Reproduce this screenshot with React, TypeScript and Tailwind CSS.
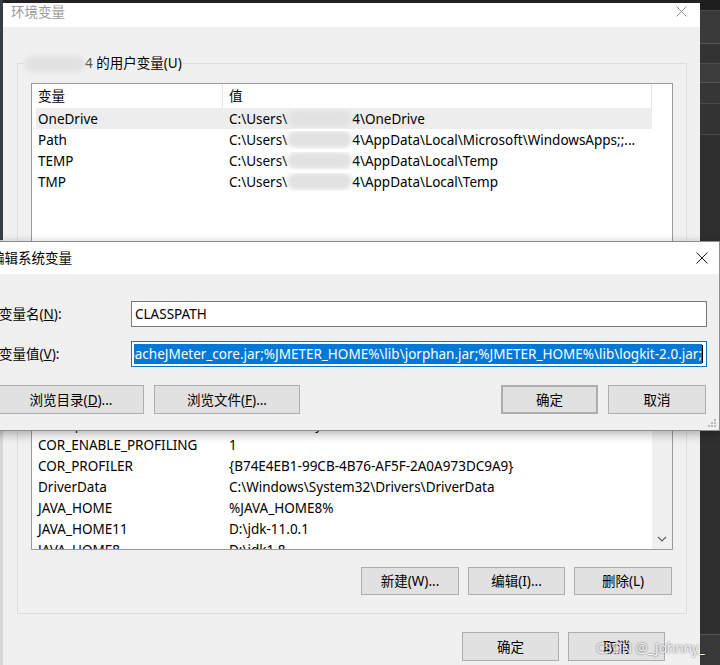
import React from 'react';

type Row = [string, string];

const userRows = [
  { name: 'OneDrive', post: '4\\OneDrive' },
  { name: 'Path', post: '4\\AppData\\Local\\Microsoft\\WindowsApps;;...' },
  { name: 'TEMP', post: '4\\AppData\\Local\\Temp' },
  { name: 'TMP', post: '4\\AppData\\Local\\Temp' },
];

const sysRows: Row[] = [
  ['ANT_HOME', 'D:\\apache-ant-1.10.5'],
  ['CATALINA_HOME', 'D:\\apache-tomcat-9.0.14'],
  ['CLASSPATH', '.;%JAVA_HOME%\\lib\\dt.jar;%JAVA_HOME%\\lib\\tools.jar;...'],
  ['ComSpec', 'C:\\Windows\\system32\\cmd.exe'],
  ['COR_ENABLE_PROFILING', '1'],
  ['COR_PROFILER', '{B74E4EB1-99CB-4B76-AF5F-2A0A973DC9A9}'],
  ['DriverData', 'C:\\Windows\\System32\\Drivers\\DriverData'],
  ['JAVA_HOME', '%JAVA_HOME8%'],
  ['JAVA_HOME11', 'D:\\jdk-11.0.1'],
  ['JAVA_HOME8', 'D:\\jdk1.8'],
];

const classpath =
  '.;%JAVA_HOME%\\lib;%JMETER_HOME%\\lib\\ext\\ApacheJMeter_core.jar;%JMETER_HOME%\\lib\\jorphan.jar;%JMETER_HOME%\\lib\\logkit-2.0.jar;';

// Win10 风格按钮
const Btn: React.FC<{ className?: string; children: React.ReactNode }> = ({ className, children }) => (
  <div
    className={
      'flex items-center justify-center border border-[#adadad] bg-[#e1e1e1] whitespace-nowrap ' + (className || '')
    }
  >
    {children}
  </div>
);

const Blur: React.FC<{ className?: string }> = ({ className }) => (
  <span className={'inline-block rounded-full bg-[#e2e2e2] blur-[2px] align-middle ' + (className || '')} />
);

const CloseX: React.FC<{ color: string; size: number; className?: string }> = ({ color, size, className }) => (
  <svg width={size} height={size} viewBox="0 0 12 12" className={className}>
    <path d="M0.5 0.5L11.5 11.5M11.5 0.5L0.5 11.5" stroke={color} strokeWidth="1" fill="none" />
  </svg>
);

export default function App() {
  return (
    <div className="relative flex h-[665px] w-[720px] overflow-hidden bg-[#2b2b2b] font-['Noto_Sans','Noto_Sans_CJK_SC',sans-serif] text-[13.5px] leading-[18px] text-black">
      {/* 左侧边缘 */}
      <div className="flex w-[3px] flex-col">
        <div className="h-[240px] bg-[#3a3d42]" />
        <div className="flex-1 bg-[#d6d6d6]" />
      </div>

      {/* 环境变量 主窗口 */}
      <div className="flex w-[697px] flex-col bg-[#222222] pt-[3px]">
        <div className="flex flex-1 flex-col bg-[#f0f0f0]">
          <div className="flex h-[24px] items-start justify-between bg-white pl-[8px] pr-[13px]">
            <span className="text-[#9a9a9a]">环境变量</span>
            <CloseX color="#8a8a8a" size={11} className="mt-[3px]" />
          </div>

          {/* 用户变量 */}
          <fieldset className="ml-[14px] mt-[26px] w-[670px] border border-[#dcdcdc] pb-[12px]">
            <legend className="ml-[6px] h-[20px] leading-[20px]">
              <Blur className="h-[16px] w-[61px]" />
              <span className="text-[#555]">4</span> 的用户变量(U)
            </legend>
            <div className="ml-[13px] mt-[10px] h-[160px] w-[642px] border border-[#9a9a9a] bg-white">
              <div className="flex h-[24px] items-center">
                <div className="h-full w-[191px] border-r border-[#e5e5e5] pl-[6px] leading-[24px]">变量</div>
                <div className="h-full w-[429px] border-r border-[#e5e5e5] pl-[6px] leading-[24px]">值</div>
              </div>
              {userRows.map((r, i) => (
                <div
                  key={r.name}
                  className={
                    'ml-[4px] grid h-[21px] w-[616px] grid-cols-[191px_1fr] items-center ' +
                    (i === 0 ? 'bg-[#ededed]' : '')
                  }
                >
                  <div className="pl-[2px]">{r.name}</div>
                  <div className="flex items-center overflow-hidden whitespace-nowrap pl-[2px]">
                    <span>C:\Users\</span>
                    <Blur className="h-[17px] w-[65px] shrink-0" />
                    <span>{r.post}</span>
                  </div>
                </div>
              ))}
            </div>
            <div className="mt-[12px] flex justify-end gap-[9px] pr-[14px]">
              <Btn className="h-[28px] w-[98px]">新建(N)...</Btn>
              <Btn className="h-[28px] w-[97px]">编辑(E)...</Btn>
              <Btn className="h-[28px] w-[98px]">删除(D)</Btn>
            </div>
          </fieldset>

          {/* 系统变量 */}
          <fieldset className="ml-[14px] mt-[8px] w-[670px] border border-[#dcdcdc] pb-[18px]">
            <legend className="ml-[6px] h-[20px] px-[1px] leading-[20px]">系统变量(S)</legend>
            <div className="ml-[13px] mt-[1px] flex h-[225px] w-[642px] border border-[#9a9a9a] bg-white">
              <div className="flex w-[620px] flex-col">
                <div className="flex h-[24px] shrink-0 items-center">
                  <div className="h-full w-[191px] border-r border-[#e5e5e5] pl-[6px] leading-[24px]">变量</div>
                  <div className="h-full w-[429px] pl-[6px] leading-[24px]">值</div>
                </div>
                <div className="flex-1 overflow-hidden">
                  {sysRows.map(([k, v]) => (
                    <div key={k} className="ml-[4px] grid h-[21px] w-[616px] grid-cols-[191px_1fr] items-center">
                      <div className="pl-[2px]">{k}</div>
                      <div className="overflow-hidden whitespace-nowrap pl-[2px]">{v}</div>
                    </div>
                  ))}
                </div>
              </div>
              <div className="flex w-[20px] flex-col justify-end bg-[#f0f0f0]">
                <div className="flex h-[20px] items-center justify-center">
                  <svg width="10" height="6" viewBox="0 0 10 6">
                    <path d="M1 1L5 5L9 1" stroke="#606060" strokeWidth="1.2" fill="none" />
                  </svg>
                </div>
              </div>
            </div>
            <div className="mt-[17px] flex justify-end gap-[9px] pr-[14px]">
              <Btn className="h-[28px] w-[98px]">新建(W)...</Btn>
              <Btn className="h-[28px] w-[97px]">编辑(I)...</Btn>
              <Btn className="h-[28px] w-[98px]">删除(L)</Btn>
            </div>
          </fieldset>

          <div className="mt-[18px] flex justify-end gap-[9px] pr-[35px]">
            <Btn className="h-[29px] w-[97px]">确定</Btn>
            <Btn className="h-[29px] w-[97px]">取消</Btn>
          </div>
        </div>
      </div>

      {/* 右侧其他窗口 */}
      <div className="flex flex-1 flex-col bg-[#2f2f2f]">
        <div className="h-[10px] bg-[#1e1e1e]" />
        <div className="h-px bg-[#4a4a4a]" />
        <div className="h-[32px] bg-[#3a3a3a]" />
        <div className="h-px bg-[#555555]" />
        <div className="h-[19px] bg-[#333333]" />
        <div className="h-px bg-[#4d4d4d]" />
        <div className="h-[18px] bg-[#3d3d3d]" />
        <div className="h-px bg-[#555555]" />
        <div className="h-[20px] bg-[#363636]" />
        <div className="h-px bg-[#4a4a4a]" />
        <div className="h-[30px] bg-[#333333]" />
        <div className="h-px bg-[#4a4a4a]" />
        <div className="flex-1 bg-[#2f2f2f]" />
        <div className="h-px bg-[#555555]" />
        <div className="h-[30px] bg-[#383838]" />
      </div>

      {/* 编辑系统变量 对话框 */}
      <div className="absolute left-[-18px] top-[241px] flex h-[190px] w-[738px] flex-col border border-[#8e8e8e] bg-[#f0f0f0] shadow-[0_3px_10px_rgba(0,0,0,0.3)]">
        <div className="flex h-[32px] shrink-0 items-center justify-between bg-white pl-[8px] pr-[11px]">
          <span>编辑系统变量</span>
          <CloseX color="#111" size={12} />
        </div>
        <div className="flex flex-1 flex-col pl-[16px] pt-[27px]">
          <div className="flex items-center">
            <div className="w-[132px]">
              变量名(<span className="underline">N</span>):
            </div>
            <div className="flex h-[26px] w-[576px] items-center border border-[#7a7a7a] bg-white pl-[3px]">
              CLASSPATH
            </div>
          </div>
          <div className="mt-[14px] flex items-center">
            <div className="w-[132px]">
              变量值(<span className="underline">V</span>):
            </div>
            <div className="flex h-[26px] w-[576px] items-center border border-[#0078d7] bg-white pl-[2px] pr-[3px]">
              <div className="flex min-w-0 flex-1 justify-end overflow-hidden">
                <span className="shrink-0 whitespace-nowrap bg-[#0078d7] leading-[20px] text-white">{classpath}</span>
              </div>
              <span className="h-[18px] w-px shrink-0 bg-black" />
            </div>
          </div>
          <div className="ml-[-1px] mt-[18px] flex items-center justify-between pr-[13px]">
            <div className="flex gap-[10px]">
              <Btn className="h-[29px] w-[146px]">
                浏览目录(<span className="underline">D</span>)...
              </Btn>
              <Btn className="h-[29px] w-[146px]">
                浏览文件(<span className="underline">F</span>)...
              </Btn>
            </div>
            <div className="flex gap-[10px]">
              <Btn className="h-[29px] w-[97px] border-2 border-[#0078d7]">确定</Btn>
              <Btn className="h-[29px] w-[98px]">取消</Btn>
            </div>
          </div>
        </div>
        <svg width="9" height="9" viewBox="0 0 9 9" className="absolute bottom-[2px] right-[2px]">
          <rect x="6" y="0" width="2" height="2" fill="#b8b8b8" />
          <rect x="3" y="3" width="2" height="2" fill="#b8b8b8" />
          <rect x="6" y="3" width="2" height="2" fill="#b8b8b8" />
          <rect x="0" y="6" width="2" height="2" fill="#b8b8b8" />
          <rect x="3" y="6" width="2" height="2" fill="#b8b8b8" />
          <rect x="6" y="6" width="2" height="2" fill="#b8b8b8" />
        </svg>
      </div>

      {/* 水印 */}
      <div className="absolute left-[596px] top-[639px] whitespace-nowrap text-[13.5px] leading-[19px] text-white/90 [text-shadow:0_0_2px_rgba(0,0,0,0.7)]">
        CSDN @_Johnny_
      </div>
    </div>
  );
}
